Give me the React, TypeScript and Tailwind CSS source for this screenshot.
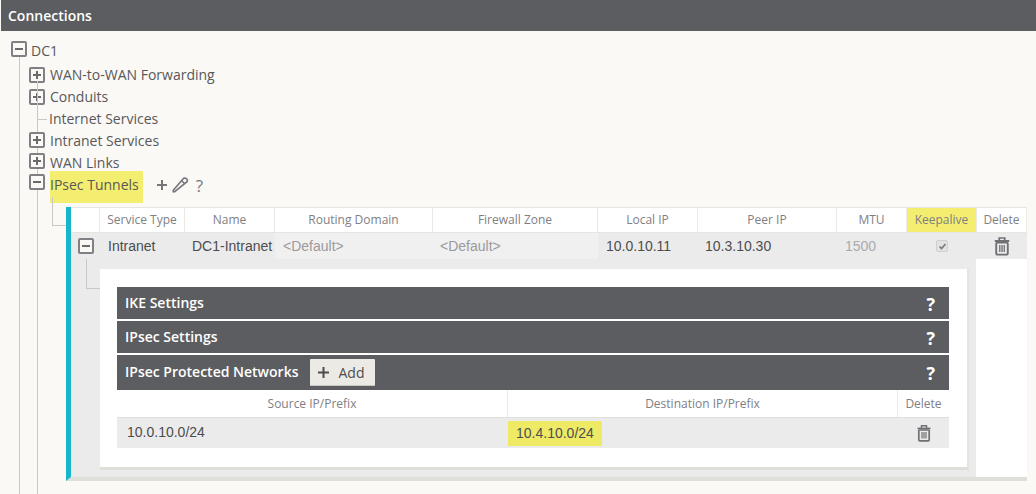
const sans = "font-['Open_Sans',sans-serif]";
const arial = "font-['Liberation_Sans',Arial,sans-serif]";

function Box({ open = false, className = "" }: { open?: boolean; className?: string }) {
  return (
    <svg width="16" height="16" viewBox="0 0 16 16" className={`shrink-0 ${className}`}>
      <rect x="1" y="1" width="14" height="14" rx="1" fill="#faf9f5" stroke="#808084" strokeWidth="2" />
      <path d={open ? "M4 8h8" : "M4 8h8M8 4v8"} stroke="#6a6a6e" strokeWidth="2" />
    </svg>
  );
}

function Trash({ size = 18, color = "#6f7073" }: { size?: number; color?: string }) {
  return (
    <svg width={size} height={size} viewBox="0 0 18 18" fill="none" stroke={color}>
      <path d="M2.5 4.5h13" strokeWidth="1.8" />
      <path d="M6.5 4V1.8h5V4" strokeWidth="1.5" />
      <rect x="3.8" y="6" width="10.4" height="10.8" rx="1" strokeWidth="1.7" />
      <path d="M7 8v6.5M9 8v6.5M11 8v6.5" strokeWidth="1.2" />
    </svg>
  );
}

function TreeRow({ label, plus = true, lift = "" }: { label: string; plus?: boolean; lift?: string }) {
  return (
    <div className="flex h-[22px] items-center pl-[29px]">
      {plus ? <Box className={lift} /> : <span className="ml-[9px] mr-px h-px w-[9px] bg-[#c9c8c3]" />}
      <span className={`-translate-y-px ${plus ? "ml-[5px]" : "ml-px"}`}>{label}</span>
    </div>
  );
}

function Bar({ label, h, children }: { label: string; h: string; children?: React.ReactNode }) {
  return (
    <div className={`flex items-center justify-between bg-[#5c5d60] pl-2 pr-[14px] text-white ${h}`}>
      <div className="flex items-center">
        <span className="-translate-y-px text-[14px] font-semibold">{label}</span>
        {children}
      </div>
      <span className="translate-y-px text-[18px] font-bold">?</span>
    </div>
  );
}

const heads: [string, boolean?][] = [
  [""],
  ["Service Type"],
  ["Name"],
  ["Routing Domain"],
  ["Firewall Zone"],
  ["Local IP"],
  ["Peer IP"],
  ["MTU"],
  ["Keepalive", true],
  ["Delete"],
];

const cols = "grid-cols-[29px_85px_90px_158px_165px_100px_139px_70px_70px_50px]";

export default function App() {
  return (
    <div className={`relative h-[494px] w-[1036px] overflow-hidden bg-[#faf9f5] text-[14px] text-[#58585a] ${sans}`}>
      <div className="ml-px flex h-[31px] items-center bg-[#5c5d60] pl-[7px] text-[14px] font-semibold text-white">Connections</div>

      <span className="absolute left-[19px] top-[57px] h-[437px] w-px bg-[#c9c8c3]" />
      <span className="absolute left-[37px] top-[81px] h-[413px] w-px bg-[#c9c8c3]" />

      <div className="mt-2 flex h-[22px] items-center pl-[11px]">
        <Box open className="-translate-y-px" />
        <span className="ml-[4px]">DC1</span>
      </div>
      <div className="mt-[3px]">
        <TreeRow label="WAN-to-WAN Forwarding" />
        <TreeRow label="Conduits" />
        <TreeRow label="Internet Services" plus={false} />
        <TreeRow label="Intranet Services" lift="-translate-y-px" />
        <TreeRow label="WAN Links" lift="-translate-y-[2px]" />
        <div className="relative flex h-[22px] items-center pl-[29px]">
          <span className="absolute left-[50px] top-[-3px] h-[32px] w-[93px] bg-[#f3ee6f]" />
          <Box open className="relative -translate-y-[3px]" />
          <span className="relative ml-[5px] -translate-y-px">IPsec Tunnels</span>
          <span className="relative ml-[16px] flex items-center gap-[2px] text-[#77777b]">
            <svg width="14" height="14" viewBox="0 0 14 14" stroke="currentColor" strokeWidth="2"><path d="M7 2v10M2 7h10" /></svg>
            <svg width="18" height="18" viewBox="0 0 24 24" fill="none" stroke="currentColor" strokeWidth="2.2"><path d="M5 21l-2 0 0-2L16 4a3 3 0 0 1 5 4Z" /><path d="M14 6l4 4" /></svg>
            <span className="ml-[5px] text-[17px] leading-none">?</span>
          </span>
        </div>
      </div>

      <span className="absolute left-[52px] top-[197px] h-[28px] w-px bg-[#c9c8c3]" />
      <span className="absolute left-[52px] top-[225px] h-px w-[14px] bg-[#c9c8c3]" />

      <div className="relative ml-[66px] mt-[11px] w-[961px] border-b-4 border-l-[5px] border-b-[#dfded9] border-l-[#16b5cb]">
        <div className={`grid h-[26px] border-b border-t border-[#e6e5e0] bg-white text-[12px] text-[#808083] ${cols}`}>
          {heads.map(([h, mark], i) => (
            <div key={i} className={`flex items-center justify-center border-r border-[#ebeae6] ${mark ? "bg-[#f3ee6f]" : ""}`}>{h}</div>
          ))}
        </div>
        <div className={`grid h-[26px] items-center bg-[#ebebec] text-[14px] text-[#4d4d4f] ${cols} ${arial}`}>
          <div className="flex justify-end pr-[6px]"><Box open /></div>
          <div className="pl-2">Intranet</div>
          <div className="pl-[7px]">DC1-Intranet</div>
          <div className="flex h-full items-center bg-[#f0f0f0] pl-2 text-[#9a9a9c]">&lt;Default&gt;</div>
          <div className="flex h-full items-center bg-[#f0f0f0] pl-[7px] text-[#9a9a9c]">&lt;Default&gt;</div>
          <div className="pl-2">10.0.10.11</div>
          <div className="pl-[7px]">10.3.10.30</div>
          <div className="pl-2 text-[#aaaaac]">1500</div>
          <div className="flex justify-center">
            <span className="flex h-3 w-3 items-center justify-center rounded-[2px] border border-[#cfcfcf] bg-[#e2e2e2]">
              <svg width="9" height="9" viewBox="0 0 9 9" fill="none" stroke="#77777b" strokeWidth="1.6"><path d="M1.5 4.5l2 2 4-4.5" /></svg>
            </span>
          </div>
          <div className="flex justify-center"><Trash size={20} /></div>
        </div>
        <div className="flex">
          <div className="relative w-[905px] bg-[#ebebec] pb-[7px] pl-[29px] pt-[10px]">
            <span className="absolute left-[15px] top-0 h-[30px] w-px bg-[#c9c8c3]" />
            <span className="absolute left-[15px] top-[29px] h-px w-[14px] bg-[#c9c8c3]" />
            <div className="h-[201px] w-[869px] border-b-[3px] border-r-[2px] border-b-[#dfded9] border-r-[#e4e3de] bg-white px-[17px] pt-[18px]">
              <div className="w-[832px]">
                <Bar label="IKE Settings" h="h-[32px]" />
                <div className="mt-0.5"><Bar label="IPsec Settings" h="h-[32px]" /></div>
                <div className="mt-0.5">
                  <Bar label="IPsec Protected Networks" h="h-[35px]">
                    <span className="ml-3 flex h-[27px] w-[65px] items-center gap-[9px] rounded-[1px] border-b border-[#c9c8c3] bg-[#ebeae5] pl-2 text-[14px] font-normal text-[#4d4d4f]">
                      <svg width="11" height="11" viewBox="0 0 11 11" stroke="#4d4d4f" strokeWidth="2"><path d="M5.5 0v11M0 5.5h11" /></svg>
                      Add
                    </span>
                  </Bar>
                </div>
                <div className="grid h-[28px] grid-cols-[391px_390px_51px] border-b border-[#e0dfda] text-[12px] text-[#808083]">
                  <div className="flex items-center justify-center border-r border-[#ebeae6]">Source IP/Prefix</div>
                  <div className="flex items-center justify-center border-r border-[#ebeae6]">Destination IP/Prefix</div>
                  <div className="flex items-center justify-center">Delete</div>
                </div>
                <div className={`grid h-[30px] grid-cols-[391px_390px_51px] items-center bg-[#ebebec] text-[14px] text-[#4d4d4f] ${arial}`}>
                  <div className="-translate-y-px pl-[10px]">10.0.10.0/24</div>
                  <div><span className="flex h-[25px] w-[94px] items-center bg-[#eeea66] pl-2">10.4.10.0/24</span></div>
                  <div className="flex justify-center"><Trash /></div>
                </div>
              </div>
            </div>
          </div>
          <div className="w-[51px] bg-white" />
        </div>
      </div>
    </div>
  );
}
